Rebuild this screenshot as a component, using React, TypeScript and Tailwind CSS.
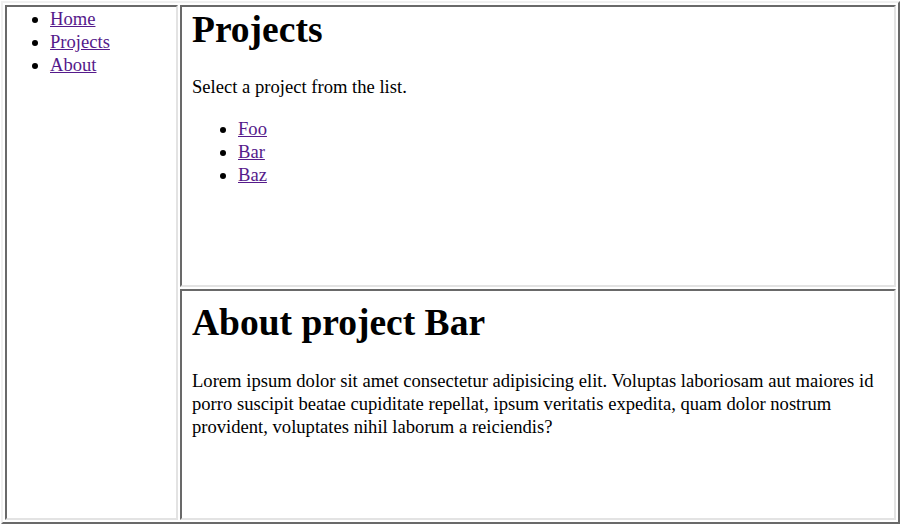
import React from 'react';

const frame =
  'border-2 border-t-[#696969] border-l-[#696969] border-r-[#e3e3e3] border-b-[#e3e3e3] bg-white overflow-hidden';

const linkCls = 'text-[#551a8b] underline';

const NavList: React.FC<{ items: string[]; className?: string }> = ({ items, className = '' }) => (
  <ul className={`list-disc leading-[23px] ${className}`}>
    {items.map((item) => (
      <li key={item}>
        <a href="#" className={linkCls}>
          {item}
        </a>
      </li>
    ))}
  </ul>
);

export default function App() {
  return (
    <div
      className="w-[900px] h-[524px] bg-white text-black text-[18.6px] pt-px pl-px"
      style={{ fontFamily: '"Liberation Serif", "Times New Roman", serif' }}
    >
      <div className="w-[899px] h-[523px] border-2 border-t-[#f0f0f0] border-l-[#f0f0f0] border-r-[#696969] border-b-[#696969] p-[2px] flex gap-[2px]">
        {/* left nav frame */}
        <div className={`${frame} w-[173px] h-full`}>
          <NavList items={['Home', 'Projects', 'About']} className="pl-[43px]" />
        </div>

        {/* right column frames */}
        <div className="flex-1 flex flex-col gap-[2px]">
          <div className={`${frame} h-[282px] px-[10px]`}>
            <h1 className="text-[37.5px] font-bold leading-[46px]">Projects</h1>
            <p className="mt-[22px] leading-[23px]">Select a project from the list.</p>
            <NavList items={['Foo', 'Bar', 'Baz']} className="pl-[46px] mt-[19px]" />
          </div>

          <div className={`${frame} flex-1 px-[10px] pt-[9px]`}>
            <h1 className="text-[37.5px] font-bold leading-[46px]">About project Bar</h1>
            <p className="mt-[23px] leading-[23px]">
              Lorem ipsum dolor sit amet consectetur adipisicing elit. Voluptas laboriosam aut maiores id porro
              suscipit beatae cupiditate repellat, ipsum veritatis expedita, quam dolor nostrum provident, voluptates
              nihil laborum a reiciendis?
            </p>
          </div>
        </div>
      </div>
    </div>
  );
}
